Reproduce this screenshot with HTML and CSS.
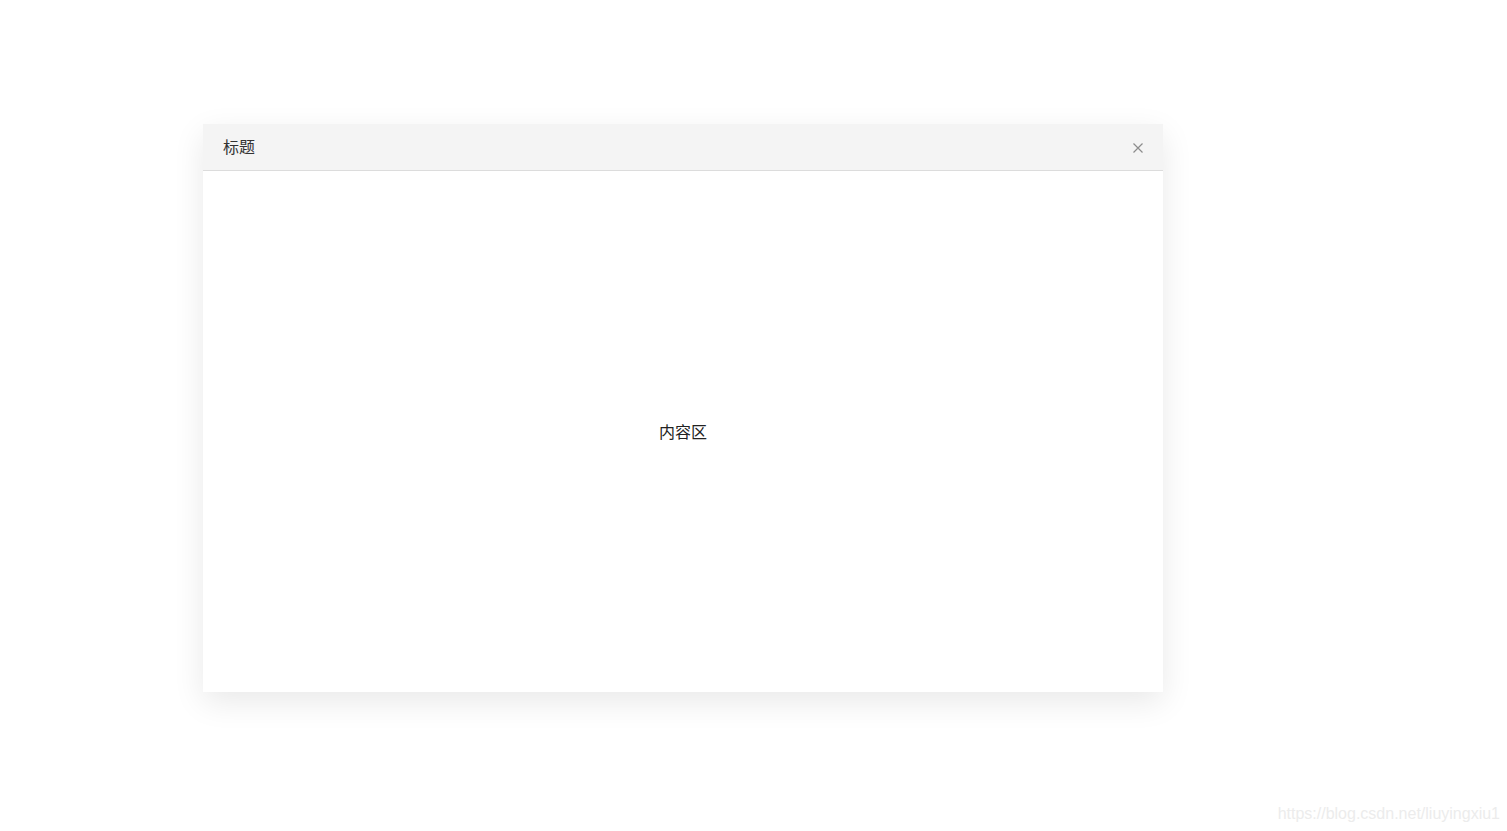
FILE: index.html
```html
<!DOCTYPE html>
<html lang="zh">
<head>
<meta charset="utf-8">
<title>Dialog</title>
<link rel="stylesheet" href="styles.css">
</head>
<body>
<div class="page">
  <div class="dialog">
    <div class="dialog-header">
      <span class="dialog-title">标题</span>
      <span class="dialog-close">
        <svg width="12" height="12" viewBox="0 0 12 12"><path d="M1.5 1.5 L10.5 10.5 M10.5 1.5 L1.5 10.5" stroke="#8c8c8c" stroke-width="1.2" fill="none"/></svg>
      </span>
    </div>
    <div class="dialog-body">内容区</div>
  </div>
</div>
<div class="watermark">https://blog.csdn.net/liuyingxiu1</div>
</body>
</html>
```

FILE: styles.css
```css
html, body {
  margin: 0;
  padding: 0;
  background: #ffffff;
  font-family: "Microsoft YaHei", "Noto Sans CJK SC", "Liberation Sans", sans-serif;
}
.page {
  width: 1507px;
  height: 831px;
  box-sizing: border-box;
  padding: 124px 0 0 203px;
}
.dialog {
  width: 960px;
  height: 568px;
  display: flex;
  flex-direction: column;
  background: #fff;
  box-shadow: 0 10px 30px rgba(0, 0, 0, 0.09);
}
.dialog-header {
  height: 46px;
  flex: none;
  display: flex;
  align-items: center;
  justify-content: space-between;
  padding: 0 19px 0 20px;
  background: #f4f4f4;
  border-bottom: 1px solid #dcdcdc;
}
.dialog-title {
  font-size: 16px;
  color: #333;
  padding-bottom: 3px;
}
.dialog-close {
  display: flex;
  padding-top: 2px;
}
.dialog-body {
  flex: 1;
  display: flex;
  align-items: center;
  justify-content: center;
  font-size: 16px;
  color: #222;
  padding-bottom: 2px;
}
.watermark {
  position: absolute;
  right: 7px;
  bottom: 8px;
  font-family: "Liberation Sans", Arial, sans-serif;
  font-size: 16px;
  color: #ececec;
}
```
